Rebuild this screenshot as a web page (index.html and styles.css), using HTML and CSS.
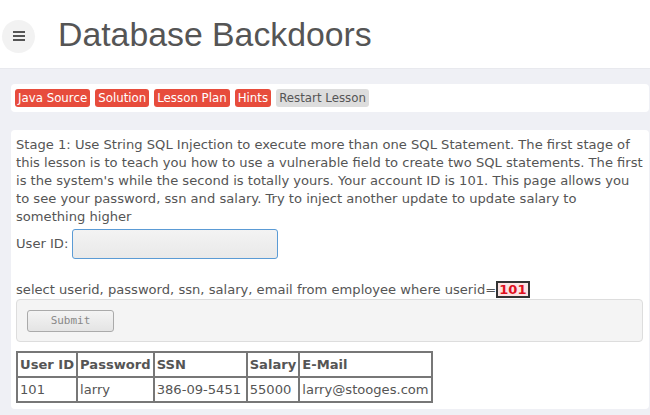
FILE: index.html
```html
<!DOCTYPE html>
<html>
<head>
  <meta charset="UTF-8">
  <title>Database Backdoors</title>
  <link rel="stylesheet" href="styles.css">
</head>
<body>
  <div class="page-header">
    <button class="menu-toggle" aria-label="Menu">
      <svg width="12" height="10" viewBox="0 0 12 10">
        <rect x="0" y="0" width="12" height="2" fill="#555"/>
        <rect x="0" y="4" width="12" height="2" fill="#555"/>
        <rect x="0" y="8" width="12" height="2" fill="#555"/>
      </svg>
    </button>
    <h1 class="page-title">Database Backdoors</h1>
  </div>

  <div class="main">
    <!-- Lesson menu -->
    <div class="lesson-menu">
      <a href="#" class="lesson-btn">Java Source</a>
      <a href="#" class="lesson-btn">Solution</a>
      <a href="#" class="lesson-btn">Lesson Plan</a>
      <a href="#" class="lesson-btn">Hints</a>
      <a href="#" class="lesson-btn lesson-btn-restart">Restart Lesson</a>
    </div>

    <div class="lesson-content">
      <p class="stage-text">Stage 1: Use String SQL Injection to execute more than one SQL Statement. The first stage of this lesson is to teach you how to use a vulnerable field to create two SQL statements. The first is the system's while the second is totally yours. Your account ID is 101. This page allows you to see your password, ssn and salary. Try to inject another update to update salary to something higher</p>
      <div class="field-row">
        <label for="userid">User ID:</label>
        <input type="text" id="userid" class="text-input" autofocus>
      </div>

      <p class="query-text">select userid, password, ssn, salary, email from employee where userid=<span class="query-value">101</span></p>

      <div class="submit-box">
        <button class="submit-btn" disabled>Submit</button>
      </div>

      <table class="results">
        <tr>
          <th>User ID</th>
          <th>Password</th>
          <th class="col-ssn">SSN</th>
          <th>Salary</th>
          <th>E-Mail</th>
        </tr>
        <tr>
          <td>101</td>
          <td>larry</td>
          <td>386-09-5451</td>
          <td>55000</td>
          <td>larry@stooges.com</td>
        </tr>
      </table>
    </div>
  </div>
</body>
</html>
```

FILE: styles.css
```css
html, body {
  margin: 0;
  padding: 0;
  height: 100%;
}

body {
  background: #eff0f5;
  font-family: 'DejaVu Sans', sans-serif;
  color: #555;
  overflow: hidden;
}

.page-header {
  height: 68px;
  background: #fff;
  border-bottom: 1px solid #e8e9ee;
  display: flex;
  align-items: center;
}

.menu-toggle {
  width: 33px;
  height: 33px;
  margin: 4px 0 0 2px;
  border: none;
  border-radius: 50%;
  background: #f2f2f2;
  display: flex;
  align-items: center;
  justify-content: center;
  padding: 0;
}

.page-title {
  margin: 0 0 0 23px;
  font-family: 'Liberation Sans', Arial, sans-serif;
  font-weight: normal;
  font-size: 33.8px;
  color: #555;
}

.main {
  padding: 15px 1px 0 11px;
}

.lesson-menu {
  background: #fff;
  border-radius: 4px;
  padding: 5px 4px;
  display: flex;
  gap: 5px;
}

.lesson-btn {
  background: #e74c3c;
  color: #fff;
  text-decoration: none;
  font-size: 11.8px;
  line-height: 18px;
  padding: 0 3px;
  border-radius: 3px;
}

.lesson-btn-restart {
  background: #ddd;
  color: #555;
}

.lesson-content {
  margin-top: 18px;
  background: #fff;
  border-radius: 4px;
  padding: 6px 6px 6px 5px;
  font-size: 13.1px;
  line-height: 18px;
}

.stage-text {
  margin: 0;
}

.field-row {
  display: flex;
  align-items: center;
  gap: 4px;
  margin-top: 3px;
}

.text-input {
  box-sizing: border-box;
  width: 206px;
  height: 30px;
  border: 1px solid #5b9bd5;
  border-radius: 3px;
  background: linear-gradient(#f3f3f3, #e9e9e9);
  padding: 1px 6px;
  font-family: 'DejaVu Sans', sans-serif;
  font-size: 13px;
  outline: none;
}

.query-text {
  margin: 22px 0 0 0;
}

.query-value {
  display: inline-block;
  color: #e0101e;
  font-weight: bold;
  background: #fbe3e3;
  border: 2px solid #333;
  line-height: 13px;
  padding: 0 1px;
}

.submit-box {
  margin-top: 0;
  background: #f4f4f4;
  border: 1px solid #ddd;
  border-radius: 4px;
  height: 41px;
  display: flex;
  align-items: center;
  padding-left: 10px;
}

.submit-btn {
  width: 87px;
  height: 22px;
  border: 1px solid #aaa;
  border-radius: 3px;
  background: linear-gradient(#f4f4f4, #e4e4e4);
  font-family: 'DejaVu Sans Mono', monospace;
  font-size: 11px;
  color: #888;
}

.results {
  margin-top: 9px;
  border-collapse: collapse;
  font-size: 13.1px;
}

.results th,
.results td {
  border: 2px solid #777;
  padding: 0 2px;
  height: 23px;
  text-align: left;
  white-space: nowrap;
}

.results th {
  font-weight: bold;
}

.col-ssn {
  width: 87px;
}
```
